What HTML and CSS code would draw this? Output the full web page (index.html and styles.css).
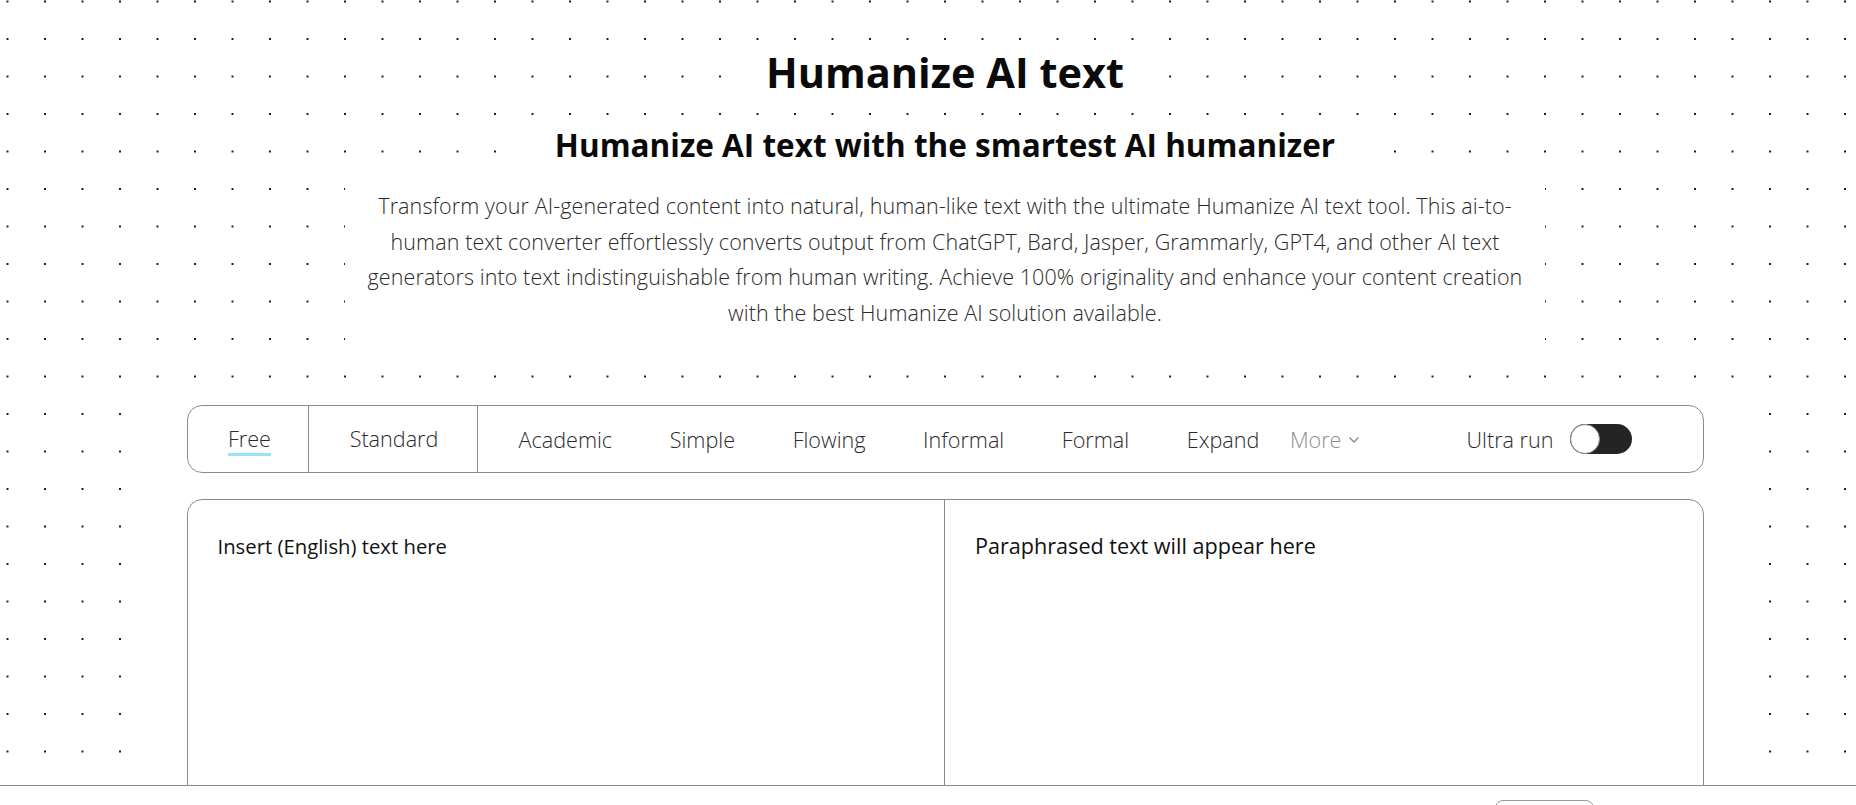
FILE: index.html
```html
<!DOCTYPE html>
<html lang="en">
<head>
<meta charset="utf-8">
<title>Humanize AI text</title>
<link rel="stylesheet" href="styles.css">
</head>
<body>
<div class="page">
  <header class="hero">
    <h1 class="title">Humanize AI text</h1>
    <h2 class="subtitle">Humanize AI text with the smartest AI humanizer</h2>
    <p class="intro">Transform your AI-generated content into natural, human-like text with the ultimate Humanize AI text tool. This ai-to-human text converter effortlessly converts output from ChatGPT, Bard, Jasper, Grammarly, GPT4, and other AI text generators into text indistinguishable from human writing. Achieve 100% originality and enhance your content creation with the best Humanize AI solution available.</p>
  </header>
  <section class="tool">
    <div class="toolbar">
      <div class="tab tab-first"><span class="tab-label tab-active">Free</span></div>
      <div class="tab tab-second"><span class="tab-label">Standard</span></div>
      <div class="modes">
        <span class="mode">Academic</span>
        <span class="mode">Simple</span>
        <span class="mode">Flowing</span>
        <span class="mode">Informal</span>
        <span class="mode">Formal</span>
        <span class="mode">Expand</span>
        <span class="more">More
          <svg class="chev" width="12" height="8" viewBox="0 0 12 8"><polyline points="1.5,1.5 6,6 10.5,1.5" fill="none" stroke="#8a8a8a" stroke-width="1.4"/></svg>
        </span>
      </div>
      <div class="ultra">
        <span class="ultra-label">Ultra run</span>
        <span class="switch"><span class="knob"></span></span>
      </div>
    </div>
    <div class="editor">
      <div class="pane pane-input">Insert (English) text here</div>
      <div class="pane pane-output">Paraphrased text will appear here</div>
    </div>
  </section>
</div>
<footer class="bottom-bar">
  <span class="bar-btn"></span>
</footer>
</body>
</html>
```

FILE: styles.css
```css
html, body {
  margin: 0;
  padding: 0;
}

body {
  font-family: "Open Sans", "Liberation Sans", sans-serif;
  color: #111;
  background-color: #fff;
  background-image: radial-gradient(circle, #1c1c1c 0.8px, rgba(0,0,0,0) 1.3px);
  background-size: 37.5px 37.5px;
  background-position: -11.25px -17.25px;
  min-height: 805px;
  overflow: hidden;
}

.page {
  padding-left: 34px;
}

.hero {
  display: flex;
  flex-direction: column;
  align-items: center;
}

.title {
  margin: 44px 0 0;
  padding: 0 22px;
  background: #fff;
  font-size: 41.5px;
  line-height: 56px;
  font-weight: 700;
  color: #0a0a0a;
}

.subtitle {
  margin: 25px 0 0;
  padding: 0 30px;
  background: #fff;
  font-size: 31.5px;
  line-height: 40px;
  font-weight: 700;
  color: #0a0a0a;
}

.intro {
  margin: 7px 0 0;
  padding: 16px 5px;
  width: 1190px;
  background: #fff;
  text-align: center;
  font-size: 21.5px;
  line-height: 35.5px;
  font-weight: 300;
  color: #2a2a2a;
  letter-spacing: 0.1px;
}

.tool {
  width: 1517px;
  margin: 39px auto 0;
  padding: 20px 36px 0;
  background: #fff;
}

.toolbar {
  box-sizing: border-box;
  height: 68px;
  border: 1px solid #8c8c8c;
  border-radius: 15px;
  display: flex;
  align-items: center;
  font-size: 21.6px;
  font-weight: 300;
  color: #2a2a2a;
}

.tab {
  height: 100%;
  display: flex;
  align-items: center;
  box-sizing: border-box;
  border-right: 1px solid #8c8c8c;
}

.tab-first {
  width: 121px;
  justify-content: center;
  padding-left: 4px;
}

.tab-second {
  width: 169px;
  justify-content: center;
  padding-left: 3px;
}

.tab-label {
  position: relative;
  line-height: 30px;
}

.tab-active::after {
  content: "";
  position: absolute;
  left: 0;
  right: 0;
  bottom: -2px;
  height: 3px;
  background: #93e7f5;
}

.modes {
  display: flex;
  align-items: center;
  gap: 57.6px;
  padding-left: 41px;
}

.more {
  margin-left: -27px;
  color: #8e8e8e;
  display: flex;
  align-items: center;
  gap: 7px;
}

.chev {
  display: block;
  margin-top: 2px;
}

.ultra {
  margin-left: auto;
  margin-right: 71px;
  display: flex;
  align-items: center;
  gap: 16px;
}

.switch {
  position: relative;
  width: 62px;
  height: 30px;
  border-radius: 15px;
  background: #242424;
  display: block;
}

.knob {
  position: absolute;
  left: 0;
  top: 0;
  box-sizing: border-box;
  width: 30px;
  height: 30px;
  border-radius: 50%;
  background: #fff;
  border: 1px solid #8a8a8a;
}

.editor {
  margin-top: 26px;
  box-sizing: border-box;
  height: 420px;
  border: 1px solid #8c8c8c;
  border-radius: 15px 15px 0 0;
  display: grid;
  grid-template-columns: 1fr 1fr;
  background: #fff;
}

.pane {
  padding: 30px 30px;
  line-height: 32px;
  color: #111;
}

.pane-input {
  border-right: 1px solid #8c8c8c;
  font-size: 20.3px;
}

.pane-output {
  font-size: 21.6px;
}

.bottom-bar {
  position: fixed;
  left: 0;
  right: 0;
  bottom: 0;
  height: 19px;
  border-top: 1px solid #8c8c8c;
  background: #fff;
  display: flex;
  justify-content: flex-end;
  padding-right: 262px;
}

.bar-btn {
  display: block;
  margin-top: 14px;
  width: 99px;
  height: 40px;
  box-sizing: border-box;
  border: 1px solid #9a9a9a;
  border-radius: 8px;
  background: #fff;
}
```
